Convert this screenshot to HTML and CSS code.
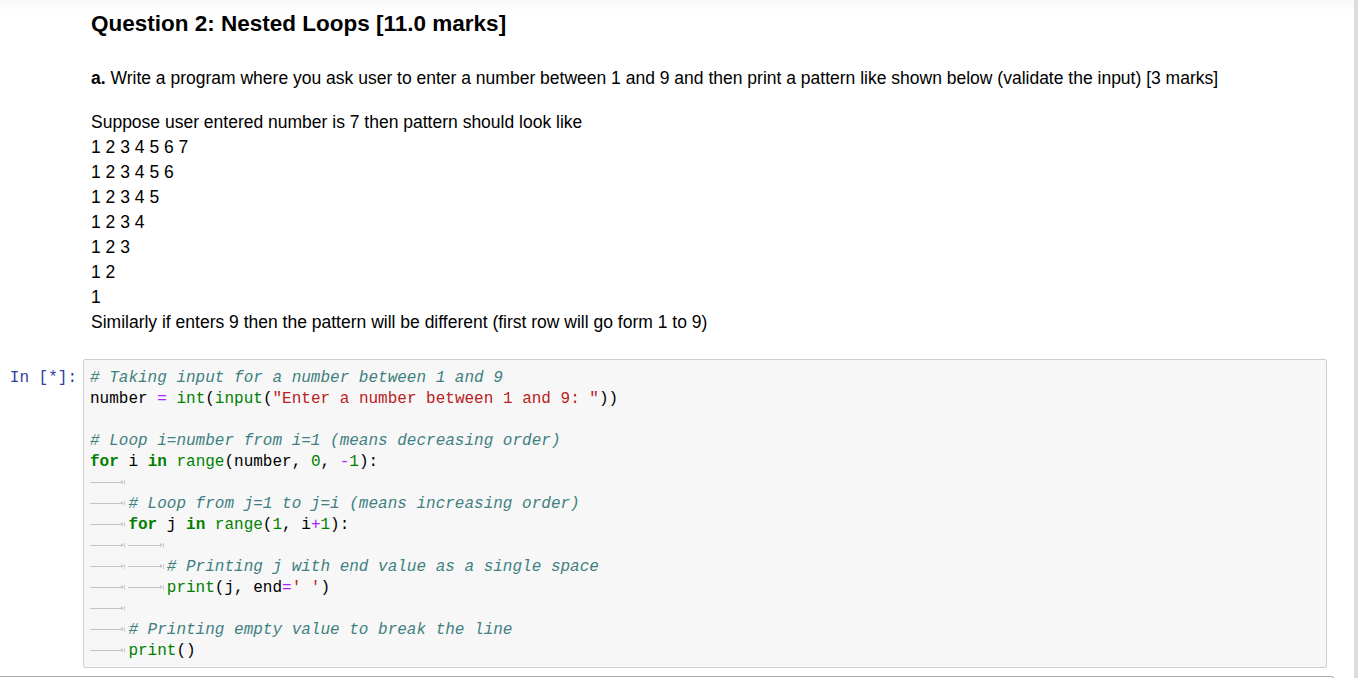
FILE: index.html
```html
<!DOCTYPE html>
<html lang="en">
<head>
<meta charset="utf-8">
<title>Question 2: Nested Loops</title>
<link rel="stylesheet" href="styles.css">
</head>
<body>
<div class="app">
  <div class="notebook">
    <div class="md-cell">
      <h2 class="md-title">Question 2: Nested Loops [11.0 marks]</h2>
      <p class="md-text"><b>a.</b> Write a program where you ask user to enter a number between 1 and 9 and then print a pattern like shown below (validate the input) [3 marks]</p>
      <p class="md-text md-pattern">Suppose user entered number is 7 then pattern should look like<br>1 2 3 4 5 6 7<br>1 2 3 4 5 6<br>1 2 3 4 5<br>1 2 3 4<br>1 2 3<br>1 2<br>1<br>Similarly if enters 9 then the pattern will be different (first row will go form 1 to 9)</p>
    </div>

    <div class="code-cell">
      <div class="prompt">In&nbsp;[*]:</div>
      <div class="input-area">
        <div class="ln"><span class="c"># Taking input for a number between 1 and 9</span></div>
        <div class="ln">number <span class="o">=</span> <span class="b">int</span>(<span class="b">input</span>(<span class="s">"Enter a number between 1 and 9: "</span>))</div>
        <div class="ln"></div>
        <div class="ln"><span class="c"># Loop i=number from i=1 (means decreasing order)</span></div>
        <div class="ln"><span class="k">for</span> i <span class="k">in</span> <span class="b">range</span>(number, <span class="n">0</span>, <span class="o">-</span><span class="n">1</span>):</div>
        <div class="ln"><span class="tab"></span></div>
        <div class="ln"><span class="tab"></span><span class="c"># Loop from j=1 to j=i (means increasing order)</span></div>
        <div class="ln"><span class="tab"></span><span class="k">for</span> j <span class="k">in</span> <span class="b">range</span>(<span class="n">1</span>, i<span class="o">+</span><span class="n">1</span>):</div>
        <div class="ln"><span class="tab"></span><span class="tab"></span></div>
        <div class="ln"><span class="tab"></span><span class="tab"></span><span class="c"># Printing j with end value as a single space</span></div>
        <div class="ln"><span class="tab"></span><span class="tab"></span><span class="b">print</span>(j, end<span class="o">=</span><span class="s">' '</span>)</div>
        <div class="ln"><span class="tab"></span></div>
        <div class="ln"><span class="tab"></span><span class="c"># Printing empty value to break the line</span></div>
        <div class="ln"><span class="tab"></span><span class="b">print</span>()</div>
      </div>
    </div>

    <div class="next-cell"></div>
  </div>
  <div class="scroll-edge"></div>
</div>
</body>
</html>
```

FILE: styles.css
```css
html, body {
  margin: 0;
  padding: 0;
  background: #ffffff;
}

body {
  height: 678px;
  overflow: hidden;
}

.app {
  display: flex;
  height: 678px;
}

.notebook {
  flex: 1;
  background: linear-gradient(#f7f7f7 0, #fdfdfd 8px, #ffffff 12px);
  overflow: hidden;
}

.scroll-edge {
  flex: 0 0 4px;
  background: #dcdcdc;
}

/* Markdown cell */
.md-cell {
  padding: 9px 0 0 91px;
  font-family: "Liberation Sans", Arial, sans-serif;
  color: #000;
}

.md-title {
  margin: 0;
  font-size: 22.5px;
  line-height: 29px;
  font-weight: bold;
}

.md-text {
  margin: 28px 0 0 0;
  font-size: 17.5px;
  line-height: 25px;
}

.md-pattern {
  margin-top: 19px;
}

/* Code cell */
.code-cell {
  display: flex;
  align-items: flex-start;
  margin-top: 24px;
  gap: 6px;
}

.prompt {
  flex: 0 0 77px;
  box-sizing: border-box;
  text-align: right;
  padding-top: 9px;
  font-family: "Liberation Mono", "DejaVu Sans Mono", monospace;
  font-size: 16px;
  line-height: 21px;
  color: #303f9f;
  white-space: nowrap;
}

.input-area {
  flex: 0 0 1244px;
  box-sizing: border-box;
  border: 1px solid #cfcfcf;
  border-radius: 2px;
  background: #f7f7f7;
  padding: 8px 6px 5px 6px;
  font-family: "Liberation Mono", "DejaVu Sans Mono", monospace;
  font-size: 16px;
  color: #000;
}

.ln {
  height: 21px;
  line-height: 21px;
  white-space: pre;
}

.c { color: #408080; font-style: italic; }
.k { color: #008000; font-weight: bold; }
.b { color: #008000; }
.n { color: #008000; }
.s { color: #ba2121; }
.o { color: #aa22ff; }

.tab {
  position: relative;
  display: inline-block;
  width: 4ch;
  height: 21px;
  vertical-align: top;
  background-image: linear-gradient(#c4c4c4, #c4c4c4);
  background-repeat: no-repeat;
  background-size: calc(100% - 7px) 1px;
  background-position: 0 9px;
}

.tab::after {
  content: "";
  position: absolute;
  right: 4px;
  top: 7px;
  width: 0;
  height: 0;
  border-left: 3px solid #c8c8c8;
  border-top: 2.5px solid transparent;
  border-bottom: 2.5px solid transparent;
}

.tab::before {
  content: "";
  position: absolute;
  right: 3px;
  top: 7px;
  width: 1px;
  height: 5px;
  background: #d0d0d0;
}

/* Following cell edge */
.next-cell {
  margin-top: 8px;
  width: 1334px;
  height: 20px;
  box-sizing: border-box;
  border-top: 1px solid #ababab;
  border-right: 1px solid #ababab;
  border-top-right-radius: 3px;
}
```
